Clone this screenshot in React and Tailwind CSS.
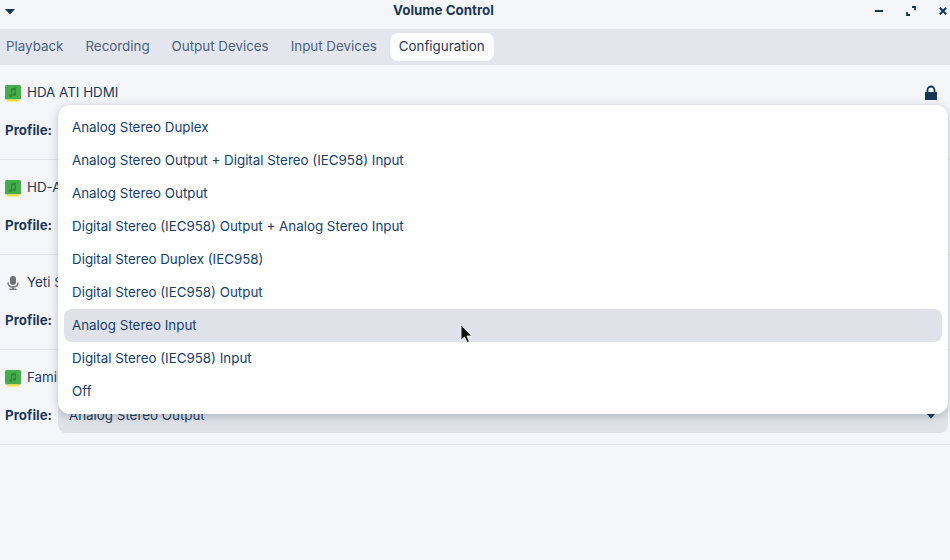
import React from "react";

const FONT = { fontFamily: "Inter, sans-serif" };

function CardIcon() {
  return (
    <svg width="16" height="17" viewBox="0 0 16 17" className="shrink-0">
      <rect x="0" y="0" width="16" height="14.5" rx="1.5" fill="#45ad4b" />
      <rect x="2" y="14.5" width="12" height="2" fill="#f5e236" />
      <path d="M6 3.5 L11 2.5 V9.5 A1.6 1.4 0 1 1 9.8 8.2 V5 L7.2 5.5 V10.5 A1.6 1.4 0 1 1 6 9.2 Z" fill="#2f8a38" />
    </svg>
  );
}

function MicIcon() {
  return (
    <svg width="16" height="16" viewBox="0 0 16 16" className="shrink-0">
      <rect x="5" y="1" width="6" height="9" rx="3" fill="#6f7378" />
      <path d="M3 7.5 C3 11 5.5 12 8 12 C10.5 12 13 11 13 7.5" fill="none" stroke="#6f7378" strokeWidth="1.4" />
      <rect x="7.2" y="12" width="1.6" height="2" fill="#6f7378" />
      <rect x="4.5" y="13.6" width="7" height="1.4" fill="#6f7378" />
    </svg>
  );
}

function Caret({ className }) {
  return (
    <svg width="10" height="6" viewBox="0 0 10 6" className={className}>
      <path d="M0 0 H10 L5 5.5 Z" fill="#123558" />
    </svg>
  );
}

function Device({ icon, name, lock, value }) {
  return (
    <div className="h-[95px] border-b border-[#e3e5ec] pl-[5px] pr-[2px] flex flex-col">
      <div className="h-[44px] mt-[5px] flex items-center gap-[6px] text-[13.36px] text-[#1f3a5a] shrink-0">
        <span className="mt-[2px] flex">{icon}</span>
        <span className="mt-[1px]">{name}</span>
        {lock && (
          <svg width="14" height="16" viewBox="0 0 14 16" className="ml-auto mr-[10px] mt-[1px]">
            <path d="M3.5 8 V5 A3.5 3.5 0 0 1 10.5 5 V8" fill="none" stroke="#123558" strokeWidth="1.8" />
            <rect x="1" y="7" width="12" height="8" rx="0.5" fill="#123558" />
          </svg>
        )}
      </div>
      <div className="flex items-center h-[34px]">
        <span className="w-[53px] pb-[2px] text-[13.36px] font-bold text-[#1f3a5a]">Profile:</span>
        <div className="flex-1 h-[34px] rounded-[8px] bg-[#dfe3e9] flex items-center pl-[11px] pr-[12px] text-[13.36px] text-[#1f3a5a]">
          <span className="pb-[2px]">{value}</span>
          <Caret className="ml-auto" />
        </div>
      </div>
    </div>
  );
}

const items = [
  "Analog Stereo Duplex",
  "Analog Stereo Output + Digital Stereo (IEC958) Input",
  "Analog Stereo Output",
  "Digital Stereo (IEC958) Output + Analog Stereo Input",
  "Digital Stereo Duplex (IEC958)",
  "Digital Stereo (IEC958) Output",
  "Analog Stereo Input",
  "Digital Stereo (IEC958) Input",
  "Off",
];

export default function App() {
  return (
    <div style={FONT} className="relative w-[950px] h-[560px] overflow-hidden bg-[#f5f6fa] text-[#1f3a5a]">
      <div className="relative h-[29px] flex justify-center pr-[63px]">
        <Caret className="absolute left-[5px] top-[9px]" />
        <span className="text-[13.36px] font-bold text-[#1c3857]">Volume Control</span>
        <div className="absolute top-0 left-0 w-full h-full">
          <svg width="8" height="2" className="absolute left-[875px] top-[10px]"><rect width="8" height="2" fill="#123558" /></svg>
          <svg width="10" height="10" viewBox="0 0 10 10" className="absolute left-[906px] top-[6px]">
            <path d="M6 1 H9 V4 M1 6 V9 H4" fill="none" stroke="#123558" strokeWidth="1.8" />
          </svg>
          <svg width="8" height="8" viewBox="0 0 8 8" className="absolute left-[939px] top-[7px]">
            <path d="M0.8 0.8 L7.2 7.2 M7.2 0.8 L0.8 7.2" stroke="#123558" strokeWidth="2" />
          </svg>
        </div>
      </div>

      <div className="h-[36px] bg-[#e3e6ed] flex items-center text-[13.36px] text-[#4a6280] pl-[6px] gap-[22px]">
        <span className="pb-[2px]">Playback</span>
        <span className="pb-[2px]">Recording</span>
        <span className="pb-[2px]">Output Devices</span>
        <span className="pb-[2px]">Input Devices</span>
        <span className="bg-white text-[#1f3a5a] rounded-[8px] h-[28px] flex items-center pl-[9px] pr-[9px] pb-[2px] -ml-[9px]">Configuration</span>
      </div>

      <div>
        <Device icon={<CardIcon />} name="HDA ATI HDMI" lock />
        <Device icon={<CardIcon />} name="HD-Audio Generic" />
        <Device icon={<MicIcon />} name="Yeti Stereo Microphone" />
        <Device icon={<CardIcon />} name="Family 17h HD Audio" value="Analog Stereo Output" />
      </div>

      <div className="absolute left-[58px] top-[105px] w-[890px] h-[309px] bg-white rounded-[12px] shadow-[0_2px_10px_rgba(40,55,80,0.28)] p-[6px]">
        {items.map((t, i) => (
          <div
            key={t}
            className={
              "h-[33px] flex items-center px-[8px] text-[13.36px] text-[#17406a] rounded-[8px] " +
              (i === 6 ? "bg-[#dfe3e9]" : "")
            }
          >
            {t}
          </div>
        ))}
      </div>

      <svg width="14" height="20" viewBox="0 0 14 20" className="absolute left-[460px] top-[324px]">
        <path d="M1 1 V16 L4.6 13 L7 18.5 L9.3 17.5 L7 12 H12 Z" fill="#111" stroke="#fff" strokeWidth="0.8" />
      </svg>
    </div>
  );
}
